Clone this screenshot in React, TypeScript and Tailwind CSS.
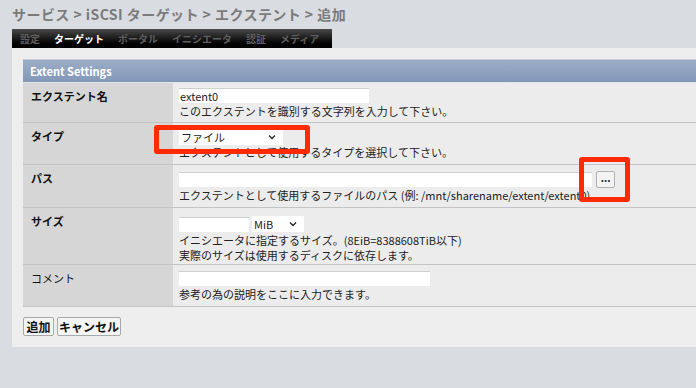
import React from "react";

const font = { fontFamily: '"Noto Sans CJK JP", "Noto Sans", sans-serif' };

function Chevron() {
  return (
    <svg width="8" height="6" viewBox="0 0 8 6" className="shrink-0">
      <path d="M1 1.5 L4 4.5 L7 1.5" fill="none" stroke="#222" strokeWidth="1.3" />
    </svg>
  );
}

function Row({
  label,
  bold = true,
  children,
  h,
  pt,
}: {
  label: string;
  bold?: boolean;
  children: React.ReactNode;
  h: string;
  pt: string;
}) {
  return (
    <div className={`flex border-b border-[#c4c4c4] ${h}`}>
      <div
        className={`w-[150px] shrink-0 bg-[#d6d6d6] pl-[8px] pt-[6px] text-[11px] leading-[15px] text-[#111] ${
          bold ? "font-bold" : "font-normal"
        }`}
      >
        {label}
      </div>
      <div className={`flex-1 bg-[#ececec] pl-[6px] ${pt} text-[11px] leading-[15px] text-[#222]`}>
        {children}
      </div>
    </div>
  );
}

export default function App() {
  return (
    <div className="relative w-[696px] h-[388px] overflow-hidden bg-[#d9dce1]" style={font}>
      <div className="h-[29px] pl-[12px] pt-[4px] text-[14px] leading-[20px] font-bold tracking-[0.45px] text-[#7b7b7b] whitespace-nowrap">
        サービス &gt; iSCSI ターゲット &gt; エクステント &gt; 追加
      </div>
      <div className="ml-[12px] w-[320px] h-[19px] flex items-center gap-[14px] pl-[8px] bg-gradient-to-b from-[#4a4a4a] via-[#1a1a1a] to-[#000] text-[10px] font-bold leading-[12px]">
        <span className="text-[#5e5e5e]">設定</span>
        <span className="text-white">ターゲット</span>
        <span className="text-[#5e5e5e]">ポータル</span>
        <span className="text-[#5e5e5e]">イニシエータ</span>
        <span className="text-[#5e5e5e]">認証</span>
        <span className="text-[#5e5e5e]">メディア</span>
      </div>
      <div className="ml-[12px] w-[720px] h-[299px] bg-[#eeeeee] pt-[11px] pl-[11px]">
        <div className="w-[700px]">
          <div className="h-[24px] border-t border-[#c9ced6] border-b border-b-[#dfe3ea] bg-gradient-to-b from-[#9cadc7] to-[#8298b7] flex items-center pl-[7px] text-white text-[11px] font-bold">
            Extent Settings
          </div>
          <Row label="エクステント名" h="h-[40px]" pt="pt-[5px]">
            <div className="w-[190px] h-[15px] bg-white border-t border-[#d0d0d0] pl-[1px] leading-[14px]">extent0</div>
            <div className="mt-[1px]">このエクステントを識別する文字列を入力して下さい。</div>
          </Row>
          <Row label="タイプ" h="h-[42px]" pt="pt-[6px]">
            <div className="w-[104px] h-[16px] bg-white flex items-center justify-between pl-[2px] pr-[7px]">
              <span>ファイル</span>
              <Chevron />
            </div>
            <div className="mt-[0px]">エクステントとして使用するタイプを選択して下さい。</div>
          </Row>
          <Row label="パス" h="h-[43px]" pt="pt-[6px]">
            <div className="flex items-center gap-[4px]">
              <div className="w-[413px] h-[15px] bg-white border-t border-[#d0d0d0]" />
              <div className="w-[19px] h-[17px] bg-[#f3f3f3] border border-[#b0b0b0] rounded-[2px] flex items-center justify-center text-[10px] font-bold leading-[10px] pb-[3px]">
                ...
              </div>
            </div>
            <div className="mt-[0px] whitespace-nowrap">
              エクステントとして使用するファイルのパス (例: /mnt/sharename/extent/extent0)
            </div>
          </Row>
          <Row label="サイズ" h="h-[57px]" pt="pt-[8px]">
            <div className="flex items-center gap-[3px]">
              <div className="w-[70px] h-[15px] bg-white border-t border-[#d0d0d0]" />
              <div className="w-[52px] h-[16px] bg-white flex items-center justify-between pl-[2px] pr-[7px]">
                <span>MiB</span>
                <Chevron />
              </div>
            </div>
            <div className="mt-[1px]">イニシエータに指定するサイズ。(8EiB=8388608TiB以下)</div>
            <div>実際のサイズは使用するディスクに依存します。</div>
          </Row>
          <Row label="コメント" bold={false} h="h-[42px]" pt="pt-[6px]">
            <div className="w-[251px] h-[15px] bg-white border-t border-[#d0d0d0]" />
            <div className="mt-[1px]">参考の為の説明をここに入力できます。</div>
          </Row>
        </div>
        <div className="mt-[10px] flex gap-[3px]">
          <div className="w-[31px] h-[19px] bg-[#f4f4f4] border border-[#a9a9a9] rounded-[2px] flex items-center justify-center text-[12px] font-bold text-[#111]">
            追加
          </div>
          <div className="w-[64px] h-[19px] bg-[#f4f4f4] border border-[#a9a9a9] rounded-[2px] flex items-center justify-center text-[12px] font-bold text-[#111]">
            キャンセル
          </div>
        </div>
      </div>
      <div className="absolute left-[154px] top-[125px] w-[156px] h-[29px] border-[5px] border-[#ff2a00] rounded-[3px]" />
      <div className="absolute left-[579px] top-[157px] w-[51px] h-[45px] border-[5px] border-[#ff2a00] rounded-[3px]" />
    </div>
  );
}
